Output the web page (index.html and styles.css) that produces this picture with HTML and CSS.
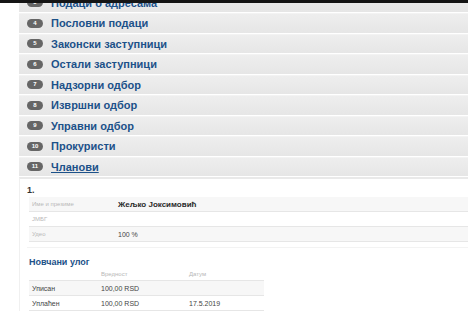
FILE: index.html
```html
<!DOCTYPE html>
<html lang="sr">
<head>
    <meta charset="UTF-8">
    <title>Чланови</title>
    <link rel="stylesheet" href="styles.css">
</head>
<body>

<div class="topbar"></div>

<div class="page">
    <div class="section"><span class="badge">3</span><a class="title">Подаци о адресама</a></div>
    <div class="section"><span class="badge">4</span><a class="title">Пословни подаци</a></div>
    <div class="section"><span class="badge">5</span><a class="title">Законски заступници</a></div>
    <div class="section"><span class="badge">6</span><a class="title">Остали заступници</a></div>
    <div class="section"><span class="badge">7</span><a class="title">Надзорни одбор</a></div>
    <div class="section"><span class="badge">8</span><a class="title">Извршни одбор</a></div>
    <div class="section"><span class="badge">9</span><a class="title">Управни одбор</a></div>
    <div class="section"><span class="badge">10</span><a class="title">Прокуристи</a></div>
    <div class="section open"><span class="badge">11</span><a class="title active">Чланови</a></div>

    <div class="panel">
        <div class="member-no">1.</div>
        <table class="details">
            <tr>
                <td class="label">Име и презиме</td>
                <td class="name">Жељко Јоксимовић</td>
            </tr>
            <tr>
                <td class="label">ЈМБГ</td>
                <td></td>
            </tr>
            <tr>
                <td class="label">Удео</td>
                <td>100 %</td>
            </tr>
        </table>
        <div class="divider"></div>

        <h4 class="subtitle">Новчани улог</h4>
        <table class="money">
            <tr class="head">
                <td></td>
                <td class="label">Вредност</td>
                <td class="label">Датум</td>
            </tr>
            <tr>
                <td>Уписан</td>
                <td>100,00 RSD</td>
                <td></td>
            </tr>
            <tr>
                <td>Уплаћен</td>
                <td>100,00 RSD</td>
                <td>17.5.2019</td>
            </tr>
        </table>
    </div>
</div>

</body>
</html>
```

FILE: styles.css
```css
body {
    margin: 0;
    font-family: "Liberation Sans", Arial, sans-serif;
    background-color: #fff;
    overflow: hidden;
}
.topbar {
    position: fixed;
    top: 0;
    left: 0;
    right: 0;
    height: 3px;
    background-color: #151515;
    z-index: 2;
}
.page {
    margin-top: -7.5px;
    margin-left: 19px;
}
.section {
    display: flex;
    align-items: center;
    height: 19.5px;
    margin-bottom: 1px;
    background: linear-gradient(#eeeeee, #e6e6e6);
    border-top: 1px solid #f3f3f3;
    box-sizing: border-box;
}
.badge {
    display: inline-block;
    width: 16px;
    height: 9px;
    line-height: 9px;
    margin-left: 8px;
    margin-right: 8px;
    border-radius: 5px;
    background-color: #666;
    color: #fff;
    font-size: 6px;
    font-weight: bold;
    text-align: center;
}
.title {
    color: #1c5189;
    font-size: 11px;
    font-weight: bold;
}
.title.active {
    text-decoration: underline;
}
.panel {
    border-left: 1px solid #f0f0f0;
    border-top: 2px solid #e9e9e9;
    padding: 6px 0 0 7px;
}
.member-no {
    font-size: 9px;
    font-weight: bold;
    color: #333;
    margin-bottom: 2px;
}
table {
    border-collapse: collapse;
    font-size: 7px;
    color: #444;
}
td {
    padding: 0 3px;
    height: 14px;
    border-bottom: 1px solid #e6e6e6;
}
.details {
    width: 100%;
    margin-left: 2px;
}
.details tr:nth-child(odd) td {
    background-color: #f7f7f7;
}
.details td:first-child {
    width: 80px;
}
.label {
    color: #b8b8b8;
    font-size: 6px;
}
.name {
    font-size: 8px;
    font-weight: bold;
    color: #2a2a2a;
}
.divider {
    margin-top: 5px;
    border-top: 1px solid #f3f3f3;
}
.subtitle {
    margin: 9px 0 1px 2px;
    font-size: 9px;
    color: #1c5189;
}
.money {
    width: 235px;
    margin-left: 2px;
}
.money td:first-child {
    width: 63px;
}
.money td:nth-child(2) {
    width: 82px;
}
.money .head td {
    height: 12px;
}
.money tr:nth-child(2) td {
    background-color: #f7f7f7;
}
```
